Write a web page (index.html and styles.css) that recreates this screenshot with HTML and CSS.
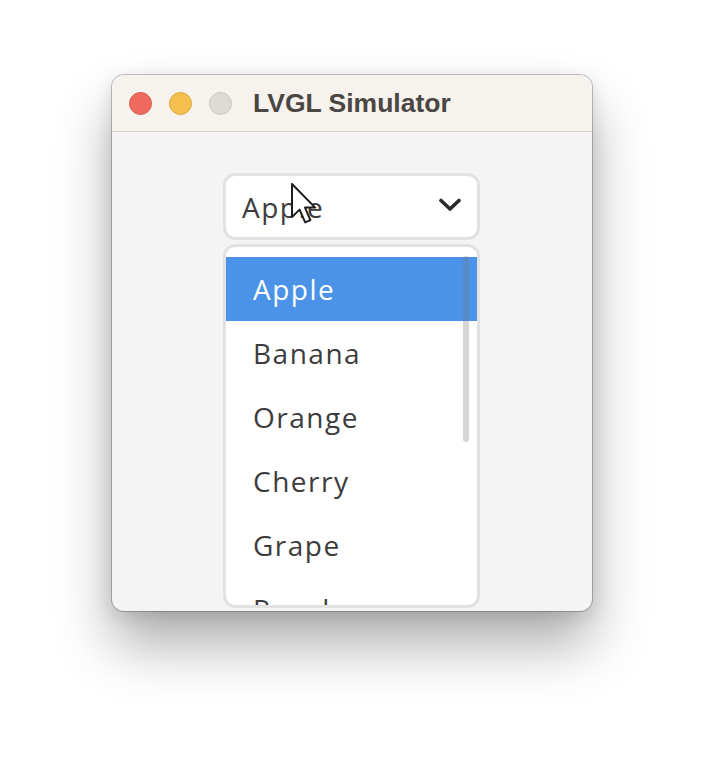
FILE: index.html
```html
<!DOCTYPE html>
<html lang="en">
<head>
    <meta charset="UTF-8">
    <meta name="viewport" content="width=device-width, initial-scale=1.0">
    <title>LVGL Simulator</title>
    <link rel="stylesheet" href="styles.css">
</head>
<body>
    <div class="window">
        <div class="titlebar">
            <span class="light red"></span>
            <span class="light yellow"></span>
            <span class="light grey"></span>
            <span class="title">LVGL Simulator</span>
        </div>

        <div class="content">
            <div class="dropdown">
                <div class="dd-button">
                    <span>Apple</span>
                    <svg class="chevron" width="24" height="14" viewBox="0 0 24 14">
                        <path d="M3 2.5 L12 11 L21 2.5" fill="none" stroke="#2a2a2a" stroke-width="3.6" stroke-linecap="round" stroke-linejoin="round"/>
                    </svg>
                </div>

                <!-- Open list -->
                <div class="dd-list">
                    <div class="item selected">Apple</div>
                    <div class="item">Banana</div>
                    <div class="item">Orange</div>
                    <div class="item">Cherry</div>
                    <div class="item">Grape</div>
                    <div class="item">Raspberry</div>
                    <div class="scrollbar"></div>
                </div>
            </div>

            <svg class="cursor" width="28" height="44" viewBox="0 0 14 22">
                <path d="M1 1 L1 17.5 L4.8 13.8 L7.6 20.2 L10.2 19.1 L7.5 12.8 L12.6 12.8 Z" fill="#fff" stroke="#1e1e1e" stroke-width="1" stroke-linejoin="round"/>
            </svg>
        </div>
    </div>
</body>
</html>
```

FILE: styles.css
```css
html {
    background-color: #ffffff;
}

body {
    margin: 0;
    padding: 75px 0 0 112px;
    min-height: 760px;
    box-sizing: border-box;
    font-family: "Open Sans", sans-serif;
}

.window {
    width: 480px;
    height: 536px;
    border-radius: 12px;
    overflow: hidden;
    background-color: #f4f4f4;
    box-shadow: 0 0 0 1px rgba(0, 0, 0, 0.22),
                0 4px 18px rgba(0, 0, 0, 0.12),
                0 34px 56px rgba(0, 0, 0, 0.32);
}

.titlebar {
    height: 56px;
    display: flex;
    align-items: center;
    padding-left: 17px;
    background-color: #f6f2ed;
    border-bottom: 1px solid #d6d3cf;
}

.light {
    width: 23px;
    height: 23px;
    border-radius: 50%;
    margin-right: 17px;
    box-sizing: border-box;
}

.light.red {
    background-color: #ee6a5f;
    border: 1px solid #d9574c;
}

.light.yellow {
    background-color: #f5bf4f;
    border: 1px solid #dea93c;
}

.light.grey {
    background-color: #dedad5;
    border: 1px solid #cbc7c2;
    margin-right: 21px;
}

.title {
    font-family: "Liberation Sans", Arial, sans-serif;
    font-weight: bold;
    font-size: 26.5px;
    color: #4a4643;
}

.content {
    position: relative;
    height: 479px;
    padding-top: 41px;
    box-sizing: border-box;
}

.dropdown {
    width: 257px;
    margin-left: 111px;
}

.dd-button {
    height: 67px;
    box-sizing: border-box;
    display: flex;
    align-items: center;
    justify-content: space-between;
    padding: 0 15px 0 16px;
    background-color: #ffffff;
    border: 3px solid #e2e2e2;
    border-radius: 12px;
    font-size: 28px;
    letter-spacing: 1.5px;
    color: #3c3c3c;
}

.chevron {
    margin-top: -3px;
}

.dd-list {
    position: relative;
    height: 364px;
    margin-top: 4px;
    padding-top: 10px;
    box-sizing: border-box;
    background-color: #ffffff;
    border: 3px solid #e2e2e2;
    border-radius: 12px;
    overflow: hidden;
}

.item {
    height: 64px;
    display: flex;
    align-items: center;
    padding-left: 27px;
    font-size: 28px;
    letter-spacing: 1.5px;
    color: #3c3c3c;
}

.item.selected {
    background-color: #4a93e8;
    color: #ffffff;
}

.scrollbar {
    position: absolute;
    top: 9px;
    right: 8px;
    width: 6px;
    height: 186px;
    border-radius: 3px;
    background-color: rgba(120, 120, 120, 0.3);
}

.cursor {
    position: absolute;
    top: 50px;
    left: 178px;
}
```
